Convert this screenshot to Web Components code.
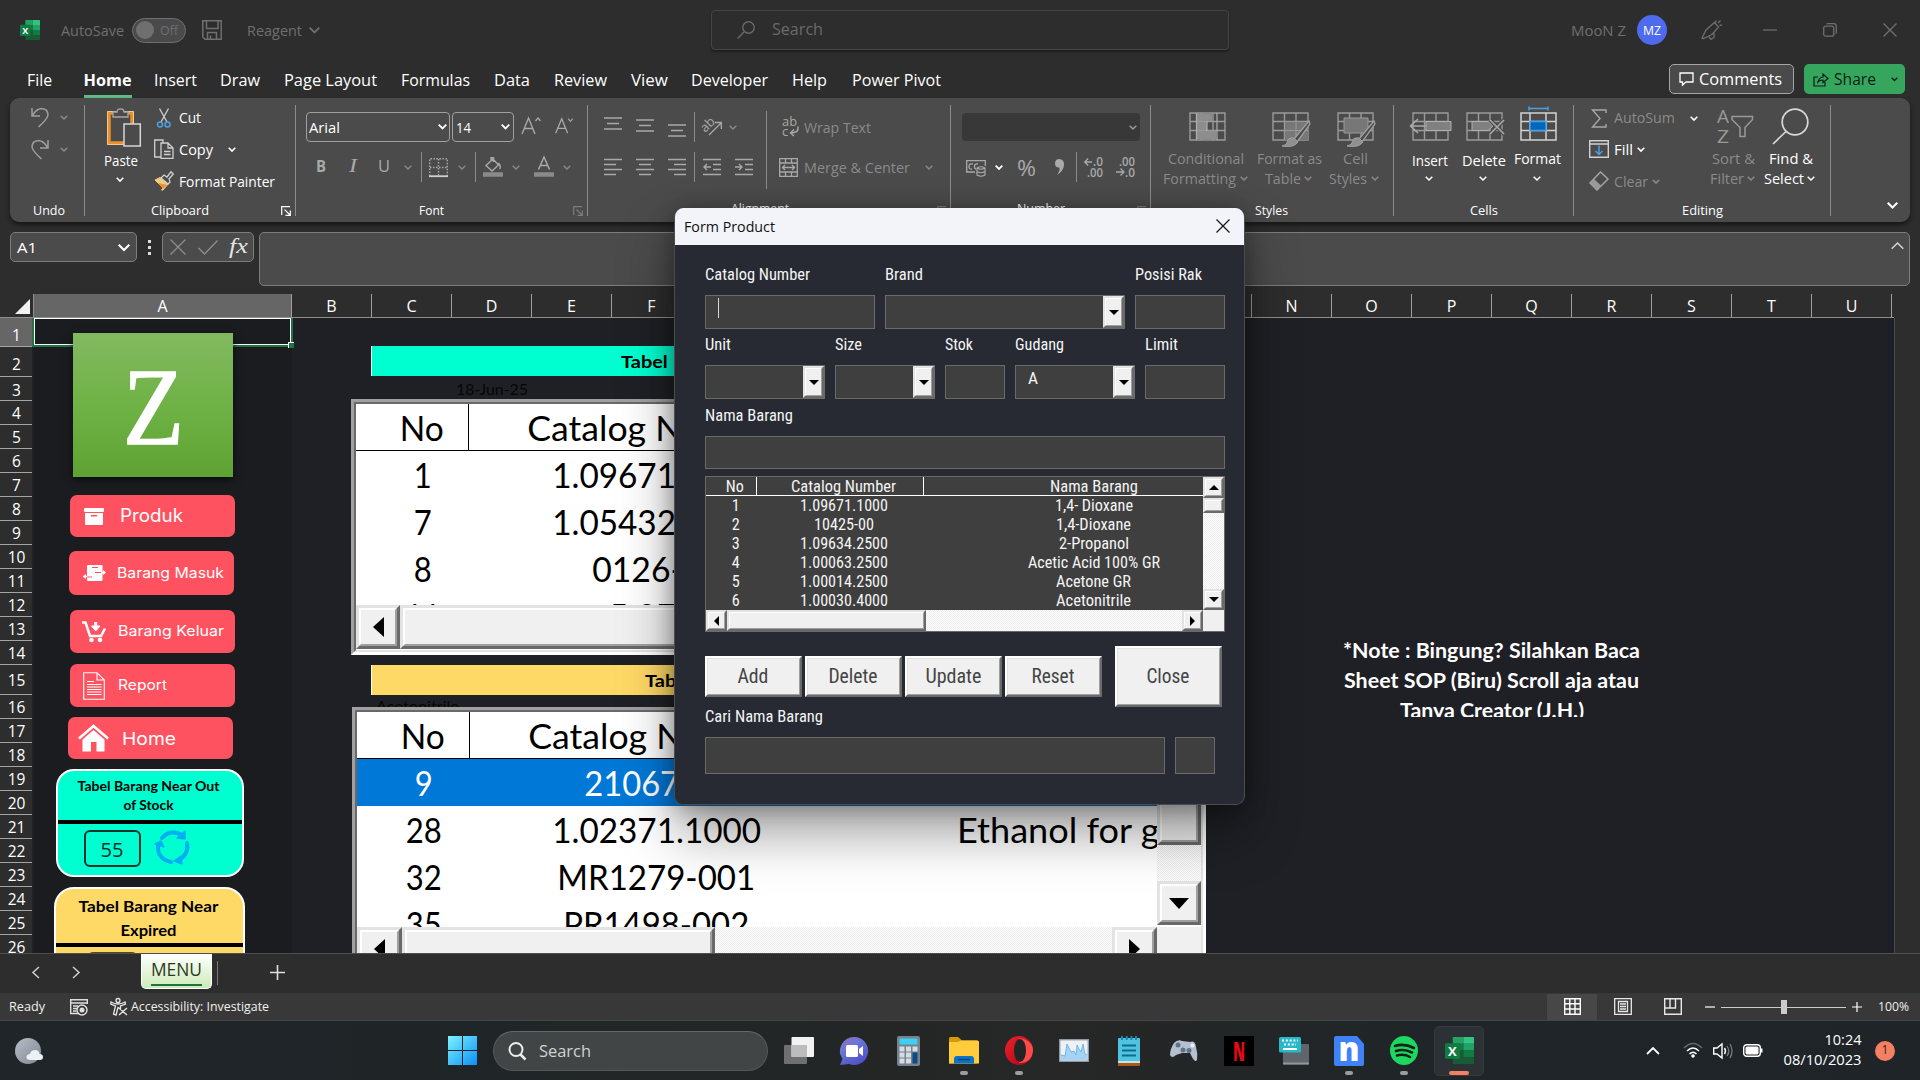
<!DOCTYPE html>
<html lang="id">
<head>
<meta charset="utf-8">
<title>Reagent - Excel</title>
<style>
html,body{margin:0;height:100%;background:#2d2d2d;overflow:hidden}
body{font-family:"Open Sans","Noto Sans",sans-serif;color:#fff;width:1920px;height:1080px}
</style>
</head>
<body>
<excel-app></excel-app>
<script>
const BASE = `<style>
:host{display:block;box-sizing:border-box}
*{box-sizing:border-box}
.h{display:flex;flex:none;align-self:stretch}
.v{display:flex;flex-direction:column;flex:none;align-self:flex-start}
.c{display:flex;flex:none;align-items:center}
svg{display:block;flex:none;overflow:visible}
</style>`;
/* Horizontal run: each item is [left, width, content], widths flow one after another. */
const H = (x0, items) => { let p = x0; return '<div class="h">' + items.map(([x, w, c, s = '']) => { const m = x - p; p = x + w; return `<div class="c" style="margin-left:${m}px;width:${w}px;${s}">${c}</div>`; }).join('') + '</div>'; };
/* Vertical run: each item is [top, height, content]. */
const V = (y0, items) => { let p = y0; return '<div class="v">' + items.map(([y, h, c, s = '']) => { const m = y - p; p = y + h; return `<div class="c" style="margin-top:${m}px;height:${h}px;${s}">${c}</div>`; }).join('') + '</div>'; };
const T = (s, w, fs, st = '') => `<fit-text w="${w}" style="font-size:${fs}px;${st}">${s}</fit-text>`;
const S = (w, h, inner, st = '') => `<svg width="${w}" height="${h}" viewBox="0 0 ${w} ${h}" fill="none" style="${st}">${inner}</svg>`;
const chev = (c = '#fff', w = 8, sw = 1.6) => S(w, w / 2 + 1, `<path d="M.7 .7L${w / 2} ${w / 2}L${w - .7} .7" stroke="${c}" stroke-width="${sw}"/>`);
const def = (name, html, css = '') => customElements.define(name, class extends HTMLElement {
  connectedCallback() {
    if (this.shadowRoot) return;
    this.attachShadow({ mode: 'open' }).innerHTML = BASE + `<style>${css}</style>` + (typeof html === 'function' ? html(this) : html);
  }
});

/* Text squeezed or widened to a known width; --dx and --dy nudge its baseline. */
customElements.define('fit-text', class extends HTMLElement {
  connectedCallback() {
    if (this.shadowRoot) return;
    const r = this.attachShadow({ mode: 'open' });
    r.innerHTML = '<style>:host{display:block;white-space:nowrap;flex:none;line-height:1.3}span{display:inline-block;transform-origin:0 50%}</style><span><slot></slot></span>';
    const sp = r.querySelector('span'), w = +this.getAttribute('w');
    const n = sp.getBoundingClientRect().width;
    this.style.width = w + 'px';
    if (n) sp.style.transform = `translate(var(--dx,0px),var(--dy,0px)) scaleX(${w / n})`;
  }
});

const excelLogo = (w, h) => `<svg width="${w}" height="${h}" viewBox="0 0 30 28" preserveAspectRatio="none"><path d="M8 0H19V7H8Z" fill="#21a366"/><path d="M19 0H29a1 1 0 0 1 1 1V7H19Z" fill="#33c481"/><path d="M8 7H19V14H8Z" fill="#107c41"/><path d="M19 7H30V14H19Z" fill="#21a366"/><path d="M8 14H19V21H8Z" fill="#185c37"/><path d="M19 14H30V21H19Z" fill="#107c41"/><path d="M8 21H30V27a1 1 0 0 1-1 1H9a1 1 0 0 1-1-1Z" fill="#185c37"/><rect x="0" y="6.500" width="15.500" height="16" rx="1.200" fill="#107c41"/><text x="7.700" y="19.500" text-anchor="middle" font-family="Open Sans" font-weight="700" font-size="13.500" fill="#fff">X</text></svg>`;

/* ---- title bar ---- */
def('title-bar', H(0, [
  [20, 20, excelLogo(20, 20)],
  [61, 63, T('AutoSave', 63, 14.5)],
  [132, 54, `<div class="tog"><i></i>${T('Off', 18, 13.5, 'color:#6e6e6e')}</div>`],
  [202, 20, S(20, 20, '<path d="M.8 .8H19.200V19.200H3L.8 17Z M4.500 1V8.500H16V1 M5.500 19V12.500H14.500V19 M8.500 19V15.500" stroke="#6f6f6f" stroke-width="1.500"/>')],
  [247, 55, T('Reagent', 55, 14.5)],
  [309, 11, chev('#6f6f6f', 11, 1.8)],
  [711, 518, `<div class="search">${H(712, [[737, 18, S(18, 18, '<circle cx="11.500" cy="6.500" r="5.700" stroke="#6a6a6a" stroke-width="1.400"/><path d="M7.500 10.500L.6 17.400" stroke="#6a6a6a" stroke-width="1.400"/>')], [772, 51, T('Search', 51, 16, 'color:#6a6a6a;--dy:-1px')]])}</div>`],
  [1571, 55, T('MooN Z', 55, 14.5)],
  [1637, 30, `<div class="av">${T('MZ', 18, 12, 'color:#fff')}</div>`],
  [1701, 21, S(21, 20, '<path d="M1 18L5 10L13.500 2.500L17.500 7L11 14.500L2.500 18.500ZM8 17L10 19.300L13 17.500L13 13M14.500 2.500L15 .3M17 3L19.500 .5M18.500 5.500L20.800 5" stroke="#6f6f6f" stroke-width="1.300"/>')],
  [1763, 14, S(14, 2, '<path d="M0 1H14" stroke="#6f6f6f" stroke-width="1.300"/>')],
  [1823, 14, S(14, 14, '<rect x=".7" y="3.200" width="10" height="10" rx="2" stroke="#6f6f6f" stroke-width="1.300"/><path d="M3.500 1Q4 .7 5 .7H10.500Q13.300 .7 13.300 3.500V9Q13.300 10 12.800 10.800" stroke="#6f6f6f" stroke-width="1.300"/>')],
  [1883, 14, S(14, 14, '<path d="M.5 .5L13.500 13.500M13.500 .5L.5 13.500" stroke="#6f6f6f" stroke-width="1.300"/>')],
]), `:host{height:60px;display:flex;color:#6f6f6f;background:#2d2d2d;--dy:.5px}
.tog{width:54px;height:25px;border:1px solid #6f6f6f;border-radius:13px;background:#4a4a4a;display:flex;align-items:center;padding-left:3px;gap:6px}
.tog i{width:18px;height:18px;border-radius:50%;background:#6f6f6f}
.search{width:518px;height:40px;display:flex;border:1px solid #454545;border-radius:4px;box-shadow:0 2px 2px rgba(0,0,0,.35)}
.av{width:30px;height:30px;border-radius:50%;background:#4f6bed;display:flex;align-items:center;justify-content:center}`);

/* ---- ribbon tabs ---- */
const tabs = [['File', 27, 25], ['Home', 84, 48], ['Insert', 154, 43], ['Draw', 220, 40], ['Page Layout', 284, 93], ['Formulas', 401, 69], ['Data', 494, 36], ['Review', 554, 53], ['View', 631, 37], ['Developer', 691, 77], ['Help', 792, 35], ['Power Pivot', 852, 89]];
def('ribbon-tabs', H(0, [
  ...tabs.map(([n, x, w]) => [x, w, n === 'Home' ? `<div class="on">${T(n, w, 16.5, 'font-weight:700;--dy:0px;--dx:-.5px')}</div>` : T(n, w, 17)]),
  [1669, 125, `<div class="btn">${H(1670, [[1679, 15, S(15, 14, '<path d="M1 1H14V10H7L3.500 13V10H1Z" stroke="#fff" stroke-width="1.300"/>')], [1699, 83, T('Comments', 83, 16.5, '--dy:0px')]])}</div>`],
  [1804, 101, `<div class="btn share">${H(1804, [[1813, 15, S(16, 15, '<path d="M5 5H1V14H12V10M5 10Q6 5.500 10 5V2L15 6.500L10 10.500V8Q7 8 5 10Z" stroke="#0d1f14" stroke-width="1.200"/>')], [1834, 42, T('Share', 42, 16.5, 'color:#0d1f14;--dy:0px')], [1891, 8, chev('#0d1f14', 7, 1.4)]])}</div>`],
]), `:host{height:38px;display:flex;--dy:1px}
.on{height:32px;border-bottom:3px solid #5fbf85;padding-top:3px;margin-bottom:-5px}
.btn{width:125px;height:30px;border:1px solid #a5a5a5;border-radius:5px;background:#4a4a4a;display:flex}
.share{width:101px;background:#36a65f;border:0}`);

/* ---- ribbon ---- */
const G = '#a9a9a9', D = '#8a8a8a';
const sep = (h) => `<div style="width:1px;height:${h}px;background:#8c8c8c"></div>`;
const lbl = (s, x, w, x0, launch, lc, dy = .8) => [202, 17, H(x0, [[x, w, T(s, w, 12.5, `--dy:${dy}px`)], ...(launch ? [[launch, 10, S(10, 10, `<path d="M.7 9V.7H9M3.500 3.500L9 9M9.300 4.500V9.300H4.500" stroke="${lc || '#7d7d7d'}" stroke-width="1.200"/>`)]] : [])])];
const lines = (arr) => S(18, 18, arr.map(([x, y, w]) => `<path d="M${x} ${y}H${x + w}" stroke="${G}" stroke-width="1.500"/>`).join(''));
const gridIcon = (w, h, extra) => S(w, h, `<path d="M1 1H36V28H1ZM1 9.500H36M1 18.500H36M12.500 1V28M24 1V28" stroke="#9a9a9a" stroke-width="1.400"/>` + extra);
const brush = '<path d="M37 9L22 27L25 30L38 12Z" fill="#4b4b4b" stroke="#a0a0a0" stroke-width="1.300"/><path d="M22 26Q15 25 15 31Q14 33 10 34Q22 36 26 30Z" fill="#909090" stroke="#a0a0a0"/>';
const aIcon = (up) => S(20, 20, `<path d="M1 18L7.500 2L14 18M3.500 12.500H11.500" stroke="${G}" stroke-width="1.400"/><path d="${up ? 'M14.500 5L17 2L19.500 5' : 'M14.500 2L17 5L19.500 2'}" stroke="${G}" stroke-width="1.200"/>`, up ? '' : 'transform:scale(.92)');

const undoG = V(98, [
  [106, 22, H(10, [[31, 18, S(18, 21, '<path d="M1 1V9H9M1.500 8.500Q5 2 10.500 1.500Q17 2 17 8Q16.500 12 7.500 20" stroke="#a0a0a0" stroke-width="1.500"/>')], [60, 8, chev('#8f8f8f', 8, 1.3)]])],
  [138, 22, H(10, [[31, 18, S(18, 21, '<path d="M17 1V9H9M16.500 8.500Q13 2 7.500 1.500Q1 2 1 8Q1.500 12 10.500 20" stroke="#a0a0a0" stroke-width="1.500"/>')], [60, 8, chev('#8f8f8f', 8, 1.3)]])],
  lbl('Undo', 33, 32, 10)]);

const pasteIc = S(34, 39, '<path d="M2 5H25V35H2Z" fill="#4b4b4b" stroke="#e8912d" stroke-width="3.500"/><path d="M.5 3.500H26.500V36.500H.5Z" stroke="#f5c98a"/><path d="M6 9V4H10Q10 .8 13.500 .8Q17 .8 17 4H21V9Z" fill="#4b4b4b" stroke="#a8a8a8" stroke-width="1.300"/><path d="M17 16H33.300V38H17Z" fill="#4b4b4b" stroke="#d6d6d6" stroke-width="1.500"/>');
const clipG = V(98, [
  [98, 100, H(85, [
    [104, 40, V(98, [[108, 38, H(104, [[107, 34, pasteIc]])], [153, 17, T('Paste', 34, 14.5)], [176, 6, H(104, [[116, 8, chev()]])]])],
    [154, 122, V(98, [
      [107, 22, H(154, [[157, 14, S(14, 20, '<path d="M2.500 .5L10 14M11.500 .5L4 14" stroke="#d0d0d0" stroke-width="1.300"/><circle cx="3" cy="16.500" r="2.500" stroke="#4ba0e0" stroke-width="1.500"/><circle cx="10.500" cy="16.500" r="2.500" stroke="#4ba0e0" stroke-width="1.500"/>')], [179, 22, T('Cut', 22, 14.5)]])],
      [138, 22, H(154, [[154, 20, S(20, 20, '<path d="M7 18H.7V1H9V4" stroke="#d0d0d0" stroke-width="1.300"/><path d="M7 4H14L19 9V19.300H7ZM14 4V9H19M10 12.500H16.500M10 15.500H16.500" stroke="#d0d0d0" stroke-width="1.300"/>')], [179, 34, T('Copy', 34, 14.5, '--dy:.7px')], [228, 8, chev()]])],
      [170, 22, H(154, [[154, 20, S(20, 20, '<path d="M1 9L9 17Q6 20 9 19L15 12L6 6.500Z" fill="#f2c879" stroke="#f5c98a"/><path d="M4 12L9 18L13 14Z" fill="#e8912d"/><path d="M7 7L10 4L13 6L17 .8L19.300 3L15 8L16 11L14 13Z" fill="#4b4b4b" stroke="#d0d0d0" stroke-width="1.300"/>')], [179, 96, T('Format Painter', 96, 14.5, '--dy:.5px')]])]])]
  ])],
  lbl('Clipboard', 151, 58, 85, 281, '#fff')]);

const c8 = (x) => [x - 1, 8, chev(D, 8, 1.3)];
const fontG = V(98, [
  [112, 30, H(296, [
    [306, 144, `<div class="combo" style="width:144px">${H(307, [[309, 31, T('Arial', 31, 14.5, '--dy:.8px')], [438, 8, chev('#fff', 9, 1.8)]])}</div>`],
    [452, 62, `<div class="combo" style="width:62px">${H(453, [[456, 15, T('14', 15, 14.5, '--dy:.8px')], [501, 8, chev('#fff', 9, 1.8)]])}</div>`],
    [521, 20, aIcon(1), 'padding-bottom:2px'], [554, 20, aIcon(0), 'padding-bottom:2px']])],
  [152, 30, H(296, [
    [316, 9, T('B', 10, 16, 'font-weight:700;--dy:-1px;color:' + G)],
    [349, 8, T('I', 8, 18, 'font-family:Liberation Serif;font-style:italic;--dy:-.5px;color:' + G)],
    [378, 11, T('U', 12, 16, 'text-decoration:underline;text-underline-offset:4px;--dy:-1px;color:' + G)], c8(405),
    [421, 1, sep(30)],
    [429, 19, S(19, 19, `<path d="M.7 18V.7H18.300V18M9.500 1V18M1 9.500H18" stroke="${G}" stroke-width="1.400" stroke-dasharray="1.500 1.500"/><path d="M0 18.200H19" stroke="#d0d0d0" stroke-width="1.800"/>`)], c8(459),
    [475, 1, sep(30)],
    [483, 20, S(20, 20, `<path d="M3 8.500L10 2L15.500 8L9 14ZM8 4V.8H10.500V5M15.500 6Q18.500 10 16.500 12" stroke="${G}" stroke-width="1.400"/><path d="M0 17.500H20" stroke="#8a8a8a" stroke-width="4.500"/>`)], c8(513),
    [534, 20, S(20, 20, `<path d="M4.500 12.500L10 0L15.500 12.500M6.500 8.500H13.500" stroke="${G}" stroke-width="1.500"/><path d="M0 17.500H20" stroke="#8a8a8a" stroke-width="4.500"/>`)], c8(564)])],
  lbl('Font', 419, 25, 296, 573)]);

const alignG = V(98, [
  [98, 94, H(588, [
    [588, 178, V(98, [
      [112, 30, H(588, [[604, 18, lines([[0, 5, 18], [3, 10.5, 12], [0, 16, 18]]), 'padding-bottom:10px'], [636, 18, lines([[0, 2, 18], [3, 7.5, 12], [0, 13, 18]])], [668, 18, lines([[0, 5, 18], [3, 10.5, 12], [0, 16, 18]]), 'padding-top:3px'], [694, 1, sep(30)],
        [702, 20, S(20, 20, `<text x="-1" y="13" transform="rotate(-45 6 10)" font-family="Open Sans" font-size="13" fill="${G}">ab</text><path d="M7 19L19 7M13 6.500H19.300V13" stroke="${G}" stroke-width="1.300"/>`), 'padding-bottom:2px'], c8(730)])],
      [152, 30, H(588, [[604, 18, lines([[0, 1.5, 18], [0, 6.5, 12], [0, 11.5, 18], [0, 16.5, 12]])], [636, 18, lines([[0, 1.5, 18], [3, 6.5, 12], [0, 11.5, 18], [3, 16.5, 12]])], [668, 18, lines([[0, 1.5, 18], [6, 6.5, 12], [0, 11.5, 18], [6, 16.5, 12]])], [694, 1, sep(30)],
        [703, 18, S(18, 18, `<path d="M0 1.500H18M10 6.500H18M10 11.500H18M0 16.500H18M8 9H1M4 6L1 9L4 12" stroke="${G}" stroke-width="1.400"/>`)],
        [735, 18, S(18, 18, `<path d="M0 1.500H18M10 6.500H18M10 11.500H18M0 16.500H18M0 9H7M4 6L7 9L4 12" stroke="${G}" stroke-width="1.400"/>`)]])]])],
    [766, 1, `<div style="width:1px;height:78px;margin-top:10px;background:#8c8c8c"></div>`],
    [779, 160, V(98, [
      [112, 30, H(779, [[782, 17, S(17, 20, `<text x="0" y="8.500" font-family="Open Sans" font-size="13" fill="${G}" textLength="15" lengthAdjust="spacingAndGlyphs">ab</text><text x="0" y="19" font-family="Open Sans" font-size="13" fill="${G}">c</text><path d="M16 9.500Q17 16 9 16M12 12.500L8.500 16L12 19" stroke="${G}" stroke-width="1.400"/>`)], [804, 67, T('Wrap Text', 67, 14.5, '--dy:.8px;color:' + D)]])],
      [152, 30, H(779, [[779, 19, S(19, 19, `<path d="M.7 .7H18.300V18.300H.7ZM.7 5H18.300M.7 14H18.300M6.500 .7V5M12.500 .7V5M6.500 14V18.300M12.500 14V18.300M3 9.500H16M6 7L3.500 9.500L6 12M13 7L15.500 9.500L13 12" stroke="${G}" stroke-width="1.300"/>`)], [804, 106, T('Merge &amp; Center', 106, 14.5, '--dy:.5px;color:' + D)], c8(926)])]])]])],
  lbl('Alignment', 731, 58, 588, 937, '', -.6)]);

const numG = V(98, [
  [113, 28, H(951, [[962, 178, `<div class="dark">${H(962, [[1129, 8, chev('#9a9a9a', 8, 1.5)]])}</div>`]])],
  [152, 30, H(951, [
    [966, 20, S(20, 17, `<path d="M9 12H.7V.7H19.300V6" stroke="${G}" stroke-width="1.300"/><path d="M7 4Q3 3 3 6.500Q3 9.500 6 9M12 4Q8.500 3.500 8.500 6.500Q8.500 9 10 9" stroke="${G}" stroke-width="1.300"/><path d="M11 8Q15 5.500 19 8V15Q15 17.500 11 15ZM11 8Q15 10.500 19 8M11 11.500Q15 14 19 11.500" fill="#4b4b4b" stroke="${G}" stroke-width="1.200"/>`), 'padding-top:3px'], [995, 8, chev('#fff', 8, 1.8)],
    [1018, 19, T('%', 19, 22, '--dx:-1px;color:' + G)],
    [1054, 11, S(11, 18, `<path d="M5 1Q10.500 1.500 10 7Q9.500 13 3 17Q6 13 5.500 9.500Q1 10 1 5Q1.500 1 5 1Z" fill="${G}"/>`)],
    [1076, 1, sep(30)],
    [1084, 20, S(20, 20, `<path d="M8 5H.7M4.200 1.500L.7 5L4.200 8.500" stroke="${G}" stroke-width="1.300"/><text x="9" y="9" font-family="Open Sans" font-size="12" font-weight="600" fill="${G}" textLength="10" lengthAdjust="spacingAndGlyphs">.0</text><text x="3" y="19.500" font-family="Open Sans" font-size="12" font-weight="600" fill="${G}" textLength="16" lengthAdjust="spacingAndGlyphs">.00</text>`)],
    [1116, 20, S(20, 20, `<path d="M0 15H8M4.500 11.500L8 15L4.500 18.500" stroke="${G}" stroke-width="1.300"/><text x="3" y="9" font-family="Open Sans" font-size="12" font-weight="600" fill="${G}" textLength="16" lengthAdjust="spacingAndGlyphs">.00</text><text x="9" y="19.500" font-family="Open Sans" font-size="12" font-weight="600" fill="${G}" textLength="10" lengthAdjust="spacingAndGlyphs">.0</text>`)]])],
  lbl('Number', 1017, 48, 951, 1137, '', -.6)]);

const big = (x0, w, ic, icx, l1, x1, w1, l2, x2, w2, cx, col, dy = 0) => [x0, w, V(98, [
  [105, 42, H(x0, [[icx, 38, ic]])],
  [150, 18, H(x0, [[x1, w1, T(l1, w1, 14.5, `--dy:${dy}px;color:` + col)]])],
  [169, 18, H(x0, [...(l2 ? [[x2, w2, T(l2, w2, 14.5, '--dy:.8px;color:' + col)]] : []), [cx - 1, 8, chev(col, 8, 1.5)]])]])];
const styleG = V(98, [
  [98, 100, H(1151, [
    big(1163, 86, gridIcon(37, 29, '<path d="M8 2H23V9H8ZM8 19H27V27H8ZM8 10H18V18H8Z" fill="#8d8d8d"/><path d="M7.500 1V28M28 1V28M18 9V19" stroke="#b0b0b0" stroke-width="1.200"/>'), 1189, 'Conditional', 1168, 76, 'Formatting', 1163, 73, 1241, D),
    big(1257, 66, gridIcon(37, 29, '<path d="M13 10H36V28H13Z" fill="#777"/><path d="M13 18.500H36M24 10V28" stroke="#9a9a9a"/>' + brush), 1272, 'Format as', 1257, 65, 'Table', 1265, 36, 1305, D),
    big(1329, 52, gridIcon(37, 29, '<path d="M7 6H31V21H7Z" fill="#777" stroke="#9a9a9a"/>' + brush), 1337, 'Cell', 1343, 25, 'Styles', 1329, 38, 1372, D)])],
  lbl('Styles', 1255, 33, 1151)]);
const cellG = V(98, [
  [98, 100, H(1394, [
    big(1410, 42, gridIcon(38, 29, '<path d="M14 9.500H39V18.500H14Z" fill="#808080" stroke="#b0b0b0"/><path d="M-2 14H14M6 7L-1.500 14L6 21" stroke="#a9a9a9" stroke-width="1.600"/>'), 1412, 'Insert', 1412, 36, '', 0, 0, 1426, '#fff', 1.5),
    big(1462, 44, gridIcon(38, 29, '<path d="M6 9.500H22L27 14L22 18.500H6Z" fill="#808080" stroke="#b0b0b0"/><path d="M24 8L38 22M38 8L24 22" stroke="#4b4b4b" stroke-width="4"/><path d="M24 8L38 22M38 8L24 22" stroke="#a9a9a9" stroke-width="1.600"/>'), 1466, 'Delete', 1462, 44, '', 0, 0, 1480, '#fff', 1.5),
    big(1514, 47, S(37, 29, '<path d="M1 1H36V28H1ZM1 9.500H36M1 18.500H36M10 1V28M26 1V28" stroke="#d2d2d2" stroke-width="1.500"/><path d="M10 9.500H26V18.500H10Z" fill="#0067c0" stroke="#4ba0e0" stroke-width="1.300"/><path d="M9 -3.500H28M9 -5.500V-1.500M28 -5.500V-1.500" stroke="#4ba0e0" stroke-width="1.500"/>'), 1520, 'Format', 1514, 47, '', 0, 0, 1534, '#fff')])],
  lbl('Cells', 1470, 28, 1394)]);
const editG = V(98, [
  [98, 100, H(1574, [
    [1589, 112, V(98, [
      [107, 22, H(1589, [[1591, 17, S(17, 19, `<path d="M15 4V1H1.500L9 9.500L1.500 18H15V15" stroke="${G}" stroke-width="1.400"/>`)], [1614, 61, T('AutoSum', 61, 14.5, 'color:' + D)], [1690, 8, chev()]])],
      [138, 22, H(1589, [[1589, 20, S(20, 18, '<path d="M.7 .7H19.300V17.300H.7ZM.7 4H19.300" stroke="#d2d2d2" stroke-width="1.400"/><path d="M10 5.500V14.500M6.500 11L10 14.500L13.500 11" stroke="#4ba0e0" stroke-width="1.500"/>')], [1614, 19, T('Fill', 19, 14.5, '--dy:.7px')], [1637, 8, chev()]])],
      [170, 22, H(1589, [[1589, 20, S(20, 20, `<path d="M1 12L11.500 1L19 8L8 19Z" stroke="${G}" stroke-width="1.400"/><path d="M1 12L5 8L12.500 15L8 19Z" fill="#999"/>`)], [1614, 34, T('Clear', 34, 14.5, '--dy:.5px;color:' + D)], [1652, 8, chev(D)]])]])],
    big(1710, 46, S(38, 34, `<text x="0" y="14" font-family="Open Sans" font-size="19" fill="#999" textLength="12" lengthAdjust="spacingAndGlyphs">A</text><text x="0" y="34" font-family="Open Sans" font-size="19" fill="#999" textLength="12" lengthAdjust="spacingAndGlyphs">Z</text><path d="M15 7.500H35.500V10.500L28 18.500V27.500H23V18.500L15 10.500Z" stroke="#999" stroke-width="1.500"/>`), 1717, 'Sort &amp;', 1712, 43, 'Filter', 1710, 34, 1748, D),
    big(1764, 54, S(37, 37, '<circle cx="23" cy="14" r="12.800" stroke="#d8d8d8" stroke-width="1.700"/><path d="M14 23.500L1 36" stroke="#d8d8d8" stroke-width="1.700"/>'), 1772, 'Find &amp;', 1769, 44, 'Select', 1764, 40, 1808, '#fff')])],
  lbl('Editing', 1682, 41, 1574)]);
const gs = '<div style="width:1px;height:111px;background:#8c8c8c"></div>';
def('excel-ribbon', H(10, [[10, 74, undoG], [84, 1, gs], [85, 210, clipG], [295, 1, gs], [296, 291, fontG], [587, 1, gs], [588, 362, alignG], [950, 1, gs], [951, 199, numG], [1150, 1, gs], [1151, 242, styleG], [1393, 1, gs], [1394, 179, cellG], [1573, 1, gs], [1574, 256, editG], [1830, 1, gs], [1887, 11, chev('#fff', 11, 2), 'padding-top:90px']]),
`:host{height:124px;margin:0 10px;display:flex;background:#4b4b4b;border-radius:9px;box-shadow:0 3px 5px rgba(0,0,0,.5)}
.combo{height:30px;border:1px solid #a0a0a0;border-radius:4px;display:flex}
.dark{height:28px;width:178px;border-radius:4px;background:#383838;display:flex}`);

/* ---- formula bar ---- */
def('formula-bar', `<div class="box nm">${H(11, [[17, 20, T('A1', 20, 14.5, '--dy:.8px')], [118, 12, chev('#fff', 12, 2)]])}</div>
<div class="dots"><i></i><i></i><i></i></div>
<div class="box fx">${H(163, [[170, 16, S(16, 16, '<path d="M.5 .5L15.500 15.500M15.500 .5L.5 15.500" stroke="#8d8d8d" stroke-width="1.300"/>')], [198, 20, S(20, 15, '<path d="M.5 8L6.500 14L19.500 .5" stroke="#8d8d8d" stroke-width="1.300"/>')], [229, 20, T('fx', 19, 22, 'font-family:Liberation Serif;font-style:italic;color:#e4e4e4;--dy:-1px')]])}</div>
<div class="box in">${chev('#d5d5d5', 13, 1.5).replace('style="', 'style="transform:scaleY(-1);')}</div>`,
`:host{height:72px;display:flex;padding:10px 10px 0}
.box{border:1px solid #7d7d7d;border-radius:5px;background:#4b4b4b;display:flex;height:30px}
.nm{width:127px}.dots{width:25px;height:30px;display:flex;flex-direction:column;gap:3px;align-items:center;justify-content:center}.dots i{width:3px;height:3px;background:#ddd}
.fx{width:92px}.in{margin-left:5px;width:1651px;height:54px;justify-content:flex-end;padding:9px 5px}`);

/* ---- bevelled scrollbar button ---- */
def('bevel-box', el => `<div class="b" style="height:100%;width:100%">${({ l: '<i style="border-width:var(--a) var(--b) var(--a) 0;border-right-color:#000"></i>', r: '<i style="border-width:var(--a) 0 var(--a) var(--b);border-left-color:#000"></i>', u: '<i style="border-width:0 var(--a) var(--b) var(--a);border-bottom-color:#000"></i>', d: '<i style="border-width:var(--b) var(--a) 0 var(--a);border-top-color:#000"></i>' })[el.getAttribute('dir')] || ''}</div>`,
`:host{--k:2px;--a:5px;--b:5px;flex:none;border-style:solid;border-width:var(--k);border-color:#e3e3e3 #696969 #696969 #e3e3e3}
:host([big]){--k:3px;--a:10px;--b:11px}
.b{background:#f0f0f0;display:flex;align-items:center;justify-content:center;border-style:solid;border-width:1px;border-color:#fff #a0a0a0 #a0a0a0 #fff}
:host([big]) .b{border-width:2px}
i{width:0;height:0;border-style:solid;border-color:transparent}`);
const bev = (w, h, dir = '', b = '') => `<bevel-box ${b} dir="${dir}" style="width:${w}px;height:${h}px"></bevel-box>`;

/* ---- embedded sheet list box ---- */
def('sheet-list', el => {
  const rows = JSON.parse(el.getAttribute('rows')), vs = el.hasAttribute('vscroll'), bodyH = +el.getAttribute('body');
  const cell = ([no, nw, cat, cw, nx, xw, cx]) => `<div class="r ${no === '9' ? 'sel' : ''}"><div class="a">${T(no, nw, 34)}</div><div class="b" style="padding-left:${cx}px">${T(cat, cw, 34)}</div>${nx ? `<div class="x">${T(nx, xw, 34)}</div>` : ''}</div>`;
  return `<div class="in"><div class="body" style="height:${bodyH}px"><div class="rows"><div class="r hd"><div class="a">${T('No', 44, 34)}</div><div class="b" style="padding-left:59px">${T('Catalog Number', 256, 34)}</div></div>${rows.map(cell).join('')}</div>
${vs ? `<div class="vs">${bev(44, 133, '', 'big')}<div class="tr" style="height:36px"></div>${bev(44, 44, 'd', 'big')}</div>` : ''}</div>
<div class="hs">${bev(vs ? 45 : 44, 44, 'l', 'big')}${bev(vs ? 313 : 600, 44, '', 'big')}<div class="tr" style="flex:1"></div>${bev(45, 44, 'r', 'big')}<div class="corner"></div></div></div>`;
}, `:host{width:854px;border-style:solid;border-width:3px;border-color:#a0a0a0 #fff #fff #a0a0a0;overflow:hidden;color:#000;font-family:Lato,sans-serif;--dx:-.2px;--dy:.5px}
.in{border-style:solid;border-width:2px;border-color:#696969 #e3e3e3 #e3e3e3 #696969;background:#fff;height:100%}
.body{display:flex;overflow:hidden}.rows{flex:none;width:800px;overflow:hidden}
.r{height:47px;display:flex;align-items:center}.hd{height:47px;border-bottom:1px solid #000}
.sel{background:#0078d7;color:#fff}
.a{width:113px;height:47px;padding-left:20px;display:flex;align-items:center;justify-content:center;flex:none}
.hd .a{border-right:1px solid #000}
.b{width:488px;flex:none;--dx:-.8px}.x{flex:none;--dx:-1px}
.vs{width:44px}.tr{background:repeating-conic-gradient(#fff 0 25%,#ededed 0 50%) 0 0/2px 2px}
.hs{display:flex;height:44px;background:#f0f0f0}.corner{width:44px}`);

/* ---- side menu button ---- */
def('side-button', el => `<span class="ic"><slot name="icon"></slot></span>${T(el.getAttribute('label'), +el.getAttribute('tw'), +el.getAttribute('fs'))}`,
`:host{display:flex;align-items:center;background:#ff5260;border-radius:7px;width:165px;font-family:Inter,sans-serif;color:#fff;--dy:.4px}
.ic{display:flex;flex:none;width:var(--iw);justify-content:flex-start;padding-left:var(--ip)}`);

/* ---- sheet ---- */
const rowH = [29, 30, 24, 24, 24, 24, 24, 24, 24, 24, 24, 24, 24, 24, 30, 24, 24, 24, 24, 24, 24, 24, 24, 24, 24, 24];
const cols = 'ABCDEFGHIJKLMNOPQRSTU'.split('');
const at = (x, y, w, h, c, s = '') => `<div style="position:absolute;left:${x}px;top:${y - 318}px;width:${w}px;${h ? `height:${h}px;` : ''}${s}">${c}</div>`;
const sb = (x, y, h, label, tx, tw, fs, ix, icon) => at(x, y, 165, h, `<side-button label="${label}" tw="${tw}" fs="${fs}" style="height:${h}px;--iw:${tx - x}px;--ip:${ix - x}px"><span slot="icon">${icon}</span></side-button>`);
const black = 'color:#000;font-family:Lato;font-weight:700';
def('sheet-grid', `<div class="ch"><div class="corner">${S(15, 15, '<path d="M15 0V15H0Z" fill="#f2f2f2"/>')}</div>${cols.map((c, i) => `<div class="col ${i ? '' : 'on'}">${c}</div>`).join('')}</div>
<div class="main"><div class="rh">${rowH.map((h, i) => `<div class="${i ? '' : 'on'}" style="height:${h}px">${i + 1}</div>`).join('')}</div>
<div class="canvas"><div class="colA"></div><div class="sel"><b></b></div>
${at(73, 333, 160, 144, T('Z', 61, 110, 'font-family:Liberation Serif;line-height:1;-webkit-text-stroke:1.5px #fff'), 'background:linear-gradient(#83b961,#6fb245 50%,#5fa234);box-shadow:0 3px 8px rgba(0,0,0,.6);display:flex;align-items:center;justify-content:center;padding-top:4px')}
${sb(70, 495, 42, 'Produk', 120, 63, 18, 84, S(20, 17, '<rect width="20" height="4" rx="1" fill="#fff"/><path d="M1 5H19V16Q19 17 18 17H2Q1 17 1 16ZM7 7V8.500H13V7Z" fill="#fff" fill-rule="evenodd"/>'))}
${sb(69, 551, 44, 'Barang Masuk', 117, 107, 14.5, 83, S(23, 17, '<rect x="4" width="15.500" height="16" rx="1" fill="#fff"/><path d="M9 2.500H15M12 7.500H18M4 12H9" stroke="#ff5260" stroke-width="1"/><path d="M0 11.500H4M19 7.500H22" stroke="#fff" stroke-width="1.500"/><path d="M20 5L23 7.500L20 10ZM3 9L0 11.500L3 14Z" fill="#fff"/>'))}
${sb(70, 610, 43, 'Barang Keluar', 118, 106, 14.5, 82, S(24, 22, '<path d="M0 1.500H3.500L8 15H19L23 7.500" stroke="#fff" stroke-width="2.500"/><path d="M13.700 1V7" stroke="#fff" stroke-width="3"/><path d="M9.500 5L13.700 10L18 5Z" fill="#fff" stroke="#fff"/><circle cx="9.500" cy="19" r="2.300" fill="#fff"/><circle cx="18" cy="19" r="2.300" fill="#fff"/>'))}
${sb(70, 664, 43, 'Report', 118, 49, 14.5, 83, S(22, 28, '<path d="M.7 .7H14L21.300 8V27.300H.7ZM14 .7V8H21.300" stroke="#fff" stroke-width="1.100"/><path d="M4 9.500H11M4 12.500H18.500M4 15H18.500M4 17.500H18.500M4 20H18.500M4 22.500H18.500" stroke="#fff" stroke-width="1.200"/>'))}
${sb(68, 717, 42, 'Home', 122, 54, 17.5, 78, S(31, 28, '<path d="M1 14.500L15.500 2L30 14.500" stroke="#fff" stroke-width="2.600"/><path d="M15.500 6L26.500 15.500V27.500H18.500V18H13V27.500H4.500V15.500Z" fill="#fff"/>')).replace('--iw', '--dy:1.200px;--iw')}
${at(56, 769, 188, 108, `<div class="ct">${T('Tabel Barang Near Out', 142, 13.5, black)}${T('of Stock', 50, 13.5, black)}</div><div class="bar"></div><div class="cb"><div class="num">${T('55', 23, 20, 'color:#062b24')}</div>${S(36, 36, '<path d="M8 8Q17 -2 29 6M33 13Q35 24 25 30M17 32Q3 29 4 15" stroke="#00b0f0" stroke-width="4" stroke-linecap="round"/><path d="M31 1L31 9L23 8ZM20 31L27 26L28 34ZM1 14L7 11L10 17Z" fill="#00b0f0" stroke="#00b0f0" stroke-width="1.500" stroke-linejoin="round"/>')}</div>`, 'background:#00ffd0;border:2px solid #fff;border-radius:18px;display:flex;flex-direction:column')}
${at(54, 887, 191, 130, `<div class="ct y">${T('Tabel Barang Near', 140, 15.5, black)}${T('Expired', 56, 15.5, black)}</div><div class="bar"></div>${'<div style="margin:5px 0 0 31px;width:51px;height:30px;border:2px solid #5a4c22;border-radius:6px"></div>'}`, 'background:#ffd966;border:2px solid #fff;border-radius:20px')}
${at(371, 346, 835, 30, T('Tabel Barang', 114, 17, black + ';--dy:1px'), 'background:#00ffd0;border-left:1px solid #fff;padding-left:249px;display:flex;align-items:center')}
${at(456, 380, 74, 18, T('18-Jun-25', 72, 14.5, 'color:#060606;font-family:Lato;--dy:1px'))}
${at(371, 665, 835, 30, T('Tabel Barang', 114, 17, black + ';--dy:1px'), 'background:#ffd966;border-left:1px solid #fff;padding-left:273px;display:flex;align-items:center')}
${at(376, 698, 90, 9, T('Acetonitrile', 83, 14.5, 'color:#060606;font-family:Lato'), 'overflow:hidden')}
${at(351, 399, 855, 256, `<sheet-list style="height:256px" body="201" rows='[["1",18,"1.09671.1000",209,"",0,84],["7",18,"1.05432.2500",209,"",0,84],["8",18,"0126-01",130,"",0,124],["11",36,"5.07010",130,"",0,140]]'></sheet-list>`)}
${at(352, 707, 855, 300, `<sheet-list vscroll style="height:300px" body="215" rows='[["9",18,"21067-01",145,"",0,115],["28",36,"1.02371.1000",209,"Ethanol for gas",236,83],["32",36,"MR1279-001",198,"",0,88],["35",36,"PR1498-002",186,"",0,94]]'></sheet-list>`)}
${at(1329, 636, 324, 81, `<div>${T('*Note : Bingung? Silahkan Baca', 297, 21.5)}</div><div>${T('Sheet SOP (Biru) Scroll aja atau', 295, 21.5)}</div><div>${T('Tanya Creator (J.H.)', 184, 21.5, '--dx:1px')}</div>`, 'overflow:hidden;font-family:Lato;font-weight:700;color:#fff" class="note')}
</div><div class="edge"></div></div>`,
`:host{height:659px;display:flex;flex-direction:column;overflow:hidden}
.ch{display:flex;height:24px;flex:none;border-bottom:1px solid #8f8f8f;width:1894px;font:16px "Open Sans"}
.corner{width:34px;padding:5px 0 0 15px;border-right:1px solid #8f8f8f}
.col{width:80px;border-right:1px solid #a0a0a0;display:flex;align-items:center;justify-content:center;height:23px;padding-top:1px}
.col.on{width:258px;background:#666}
.main{display:flex;flex:1;min-height:0;overflow:hidden}
.rh{width:34px;flex:none;border-right:1px solid #8f8f8f;font:15.5px "Open Sans"}
.rh div{border-bottom:1px solid #a5a5a5;display:flex;align-items:center;justify-content:center;padding-top:1px;line-height:20px}
.rh .on{background:#666;padding-top:5px}.rh div:nth-child(2){padding-top:5px}.rh div:nth-child(3){padding-top:2px}
.canvas{flex:none;background:#1f2025;position:relative;overflow:hidden;margin-left:-34px;padding-left:34px;width:1894px;clip-path:inset(-3px 0 0 32px)}
.colA{width:258px;height:100%;background:#1b1c20}
.sel{position:absolute;left:32px;top:-2px;width:261px;height:31px;border:2px solid #217346;box-shadow:inset 0 0 0 1px #fff}
.sel b{position:absolute;right:-3px;bottom:-3px;width:6px;height:6px;background:#217346;border-left:1px solid #fff;border-top:1px solid #fff}
.edge{flex:1;background:#2d2d2d;border-left:1px solid #4a4a4a}
.ct{height:49px;display:flex;flex-direction:column;align-items:center;justify-content:center;gap:1px;padding-top:2px;--dx:-1.5px}
.ct.y{height:54px;gap:3px;padding-top:4px}
.bar{height:4px;background:#000}
.cb{display:flex;padding:6px 0 0 26px;gap:13px;--dx:-.5px;--dy:1px}
.num{width:57px;height:37px;border:2px solid #04352c;border-radius:6px;display:flex;align-items:center;justify-content:center}
.note>div{height:30px;display:flex;justify-content:center;align-items:center}`);

/* ---- user form ---- */
def('form-box', el => `${el.hasAttribute('caret') ? '<i class="caret"></i>' : ''}<slot></slot>${el.hasAttribute('drop') ? `<div class="d">${bev(21, 32, 'd')}</div>` : ''}`,
`:host{display:flex;flex:none;background:#3f3f3f;border:1px solid #6a6a6a}
.caret{margin:2px 0 0 12px;width:1px;height:20px;background:#d8d8d8}.d{margin-left:auto}`);
def('form-button', el => `<div>${T(el.getAttribute('label'), +el.getAttribute('tw'), 19.5, 'color:#444')}</div>`,
`:host{flex:none;border-style:solid;border-width:2px;border-color:#fff #696969 #696969 #fff;background:#f0f0f0}
div{width:100%;height:100%;border-style:solid;border-width:1px;border-color:#e3e3e3 #a0a0a0 #a0a0a0 #e3e3e3;display:flex;align-items:center;justify-content:center}`);
const F = (x, w, a = '', h = 34, c = '') => [x, w, `<form-box ${a} style="width:${w}px;height:${h}px">${c}</form-box>`];
const L = (s, x, w) => [x, w, T(s, w, 16.5)];
const B = (s, x, w, tw, h) => [x, w, `<form-button label="${s}" tw="${tw}" style="width:${w}px;height:${h}px"></form-button>`];
const data = [['1', 8, '1.09671.1000', 88, '1,4- Dioxane', 78], ['2', 8, '10425-00', 60, '1,4-Dioxane', 75], ['3', 8, '1.09634.2500', 88, '2-Propanol', 70], ['4', 8, '1.00063.2500', 88, 'Acetic Acid 100% GR', 132], ['5', 8, '1.00014.2500', 88, 'Acetone GR', 75], ['6', 8, '1.00030.4000', 88, 'Acetonitrile', 75]];
def('user-form', `<div class="bar">${T('Form Product', 91, 15, 'color:#111;font-family:Open Sans;--dy:2px;--dx:1px')}${S(14, 14, '<path d="M.5 .5L13.500 13.500M13.500 .5L.5 13.500" stroke="#1a1a1a" stroke-width="1.300"/>', 'margin-top:1px')}</div>` + V(245, [
  [264, 20, H(674, [L('Catalog Number', 705, 105), L('Brand', 885, 38), L('Posisi Rak', 1135, 67)])],
  [295, 34, H(674, [F(705, 170, 'caret'), F(885, 240, 'drop'), F(1135, 90)])],
  [334, 20, H(674, [L('Unit', 705, 26), L('Size', 835, 27), L('Stok', 945, 28), L('Gudang', 1015, 49), L('Limit', 1145, 33)])],
  [365, 34, H(674, [F(705, 120, 'drop'), F(835, 100, 'drop'), F(945, 60), F(1015, 120, 'drop', 34, T('A', 10, 16.5, 'margin:1px 0 0 12px')), F(1145, 80)])],
  [405, 20, H(674, [L('Nama Barang', 705, 88)])],
  [436, 33, H(674, [F(705, 520, '', 33)])],
  [476, 156, H(674, [[705, 520, `<div class="list"><div class="top"><div class="rows">
<div class="hd"><div class="c1">${T('No', 18, 16)}</div><div class="c2">${T('Catalog Number', 105, 16)}</div><div class="c3">${T('Nama Barang', 88, 16)}</div></div>
${data.map(r => `<div class="rw"><div class="c1">${T(r[0], r[1], 16)}</div><div class="c2">${T(r[2], r[3], 16)}</div><div class="c3">${T(r[4], r[5], 16)}</div></div>`).join('')}</div>
<div class="vs">${bev(21, 21, 'u')}${bev(21, 15)}<div class="tr"></div>${bev(21, 21, 'd')}</div></div>
<div class="hs">${bev(21, 21, 'l')}${bev(199, 21)}<div class="tr"></div>${bev(21, 21, 'r')}<div class="k"></div></div></div>`]])],
  [646, 61, H(674, [B('Add', 705, 97, 31, 41), B('Delete', 805, 97, 49, 41), B('Update', 905, 97, 56, 41), B('Reset', 1005, 97, 43, 41), B('Close', 1115, 107, 43, 61)])],
  [706, 20, H(674, [L('Cari Nama Barang', 705, 118)])],
  [737, 37, H(674, [F(705, 460, '', 37), F(1175, 40, '', 37)])],
]), `:host{width:571px;height:597px;background:#272a32;border:1px solid #4a4c52;border-top:0;border-radius:9px;overflow:hidden;font-family:"Roboto Condensed",Roboto,sans-serif;font-weight:400;color:#f4f4f4;--dy:.8px;box-shadow:0 28px 54px rgba(0,0,0,.38),0 2px 22px rgba(0,0,0,.32)}
:host>.v,.v{margin-left:-1px}
.bar{height:37px;background:#f2f4f9;display:flex;align-items:center;justify-content:space-between;padding:0 15px 3px 9px;margin:0 -1px}
.list{width:520px;height:156px;border:1px solid #6a6a6a;background:#3f3f3f;--dx:-1px;--dy:.5px}
.top{display:flex;height:133px}.rows{width:497px;flex:none;overflow:hidden}
.hd,.rw{display:flex;height:19px}.hd{border-bottom:1px solid #fff;height:19px}
.c1,.c2,.c3{display:flex;align-items:center;justify-content:center;flex:none;overflow:visible}
.c1{width:51px;padding-left:8px;--dx:-.3px}.c2{width:167px;padding-left:8px}.c3{width:341px}
.hd .c1,.hd .c2{border-right:1px solid #fff}
.vs{width:21px;display:flex;flex-direction:column}.hs{display:flex;height:21px}
.tr{flex:1;background:repeating-conic-gradient(#fff 0 25%,#ededed 0 50%) 0 0/2px 2px}
.k{width:21px;background:#f0f0f0}
form-button{--dx:-.6px;--dy:0px}`);

/* ---- sheet tabs and status bar ---- */
def('sheet-tabs', H(0, [
  [32, 8, S(8, 13, '<path d="M7 1L1 6.500L7 12" stroke="#d0d0d0" stroke-width="1.500"/>')],
  [72, 8, S(8, 13, '<path d="M1 1L7 6.500L1 12" stroke="#d0d0d0" stroke-width="1.500"/>')],
  [141, 71, `<div class="tab"><div>${T('MENU', 51, 18, 'color:#2b3b22')}</div></div>`],
  [217, 1, '<div style="width:1px;height:24px;background:#777"></div>'],
  [270, 15, S(15, 15, '<path d="M7.500 0V15M0 7.500H15" stroke="#e0e0e0" stroke-width="1.600"/>')]]),
`:host{height:40px;display:flex;background:#2d2d2d;border-top:1px solid #4f4f4f}
.h{height:37px}
.tab{width:71px;height:35px;margin:-1px 0 1px;border-radius:0 0 5px 5px;background:linear-gradient(#fff,#cdebb8);border:1px solid #fff;border-top:0;display:flex;justify-content:center}
.tab div{border-bottom:2px solid #1a7340;height:32px;padding-top:4px}`);
def('status-bar', H(0, [
  [9, 36, T('Ready', 36, 12.5)],
  [70, 18, S(18, 17, '<path d="M9 14.500H.7V.7H17.300V5M.7 4H17.300M3 7H8M3 9.500H7M3 12H6.500" stroke="#e0e0e0" stroke-width="1.400"/><circle cx="12" cy="11" r="5" stroke="#e0e0e0" stroke-width="1.400"/><circle cx="12" cy="11" r="2.500" fill="#e0e0e0"/>'), 'padding-top:2px'],
  [110, 18, S(18, 18, '<circle cx="8" cy="2.500" r="2" stroke="#e8e8e8" stroke-width="1.300"/><path d="M1 4Q8 8 15 4L15.500 6L10.500 8V11L8 9.500L6 17L3.500 16L5.500 8L.8 6ZM9 10L17 17M17 10L9 17" stroke="#e8e8e8" stroke-width="1.300"/>')],
  [131, 137, T('Accessibility: Investigate', 138, 12.5)],
  [1547, 50, `<div class="on">${S(17, 17, '<path d="M.7 .7H16.300V16.300H.7ZM.7 5.800H16.300M.7 11H16.300M5.800 .7V16.300M11 .7V16.300" stroke="#fff" stroke-width="1.400"/>')}</div>`],
  [1614, 18, S(18, 17, '<path d="M.7 .7H17.300V16.300H.7ZM4.500 3.500H13.500V13.500H4.500ZM6 6H12M6 8.500H12M6 11H12" stroke="#e8e8e8" stroke-width="1.300"/>')],
  [1664, 18, S(18, 17, '<path d="M.7 .7H17.300V16.300H.7ZM.7 10H11.500V.7M6 .7V10" stroke="#e8e8e8" stroke-width="1.400"/>')],
  [1705, 10, S(10, 2, '<path d="M0 1H10" stroke="#fff" stroke-width="1.200"/>')],
  [1721, 125, S(125, 14, '<path d="M0 7.500H125" stroke="#ccc"/><rect x="60" y="0" width="6" height="14" fill="#ccc"/>')],
  [1852, 10, S(10, 10, '<path d="M0 5H10M5 0V10" stroke="#fff" stroke-width="1.200"/>')],
  [1878, 31, T('100%', 31, 12.5)]]),
`:host{height:27px;display:flex;background:#383838;color:#f0f0f0;--dy:1.3px}
.on{width:50px;height:26px;background:#474747;display:flex;align-items:center;justify-content:center}`);

/* ---- taskbar ---- */
const apps = [
  [799, S(30, 27, '<rect y="8" width="23" height="19" rx="1" fill="#6f6f6f"/><rect x="7.500" y="0" width="22.500" height="20" rx="1" fill="#f2f2f2"/><rect x="7.500" y="8" width="15.500" height="12" fill="#bcbcbc"/>')],
  [854, S(28, 28, '<defs><linearGradient id="c" x1="0" y1="0" x2=".6" y2="1"><stop stop-color="#a06ab4"/><stop offset=".4" stop-color="#6a76d8"/><stop offset="1" stop-color="#4f52c8"/></linearGradient></defs><path d="M14 0A14 14 0 1 1 9 27L0 28L2.500 22A14 14 0 0 1 14 0Z" fill="url(#c)"/><rect x="6" y="8" width="12" height="12" rx="1.500" fill="#fff"/><path d="M19 12L23 9V19L19 16Z" fill="#fff"/>')],
  [908, S(23, 30, '<rect width="23" height="30" rx="2" fill="#76828c"/><rect x="2.500" y="2.500" width="18" height="6" rx="1" fill="#3ed0f4"/><path d="M2.500 10.500H7.500V15.500H2.500ZM9 10.500H14V15.500H9ZM15.500 10.500H20.500V15.500H15.500ZM2.500 16.500H7.500V21.500H2.500ZM9 16.500H14V21.500H9ZM2.500 22.500H7.500V27.500H2.500ZM9 22.500H14V27.500H9Z" fill="#d5dce2"/><path d="M15.500 16.500H20.500V27.500H15.500Z" fill="#0d4a86"/>')],
  [964, S(30, 27, '<path d="M0 1.500Q0 0 1.500 0H9L13 3.500H28V26.500H0Z" fill="#d89b06"/><path d="M0 5H9L12 3.500H28.500Q30 3.500 30 5V26.500H0Z" fill="#ffcc3d"/><path d="M5 26.500V22Q5 19 8 19H22Q25 19 25 22V26.500Z" fill="#0a72c8"/><path d="M9 22.500H21" stroke="#073f78" stroke-width="1.300"/>'), 1],
  [1019, S(28, 29, '<defs><linearGradient id="o" x1="0" y1="0" x2="1" y2="1"><stop stop-color="#f2202c"/><stop offset="1" stop-color="#a00714"/></linearGradient></defs><ellipse cx="14" cy="14.500" rx="14" ry="14.500" fill="url(#o)"/><path d="M14 2Q28 4 28 14.500Q27 27 14 27Z" fill="#ff4a4a"/><ellipse cx="15" cy="14.500" rx="6" ry="11.500" fill="#222526"/>'), 1],
  [1074, S(30, 23, '<rect x=".7" y=".7" width="28.600" height="21.600" fill="#eef2f5" stroke="#8b98a6" stroke-width="1.400"/><path d="M2 16L6 17L8 5L10 9L12 13L15 12L17 16L18 6L20 10L22 13L24 5L26 15L28 16V21H2Z" fill="#a5d3f6"/><path d="M2 16L6 17L8 5L10 9L12 13L15 12L17 16L18 6L20 10L22 13L24 5L26 15L28 16" stroke="#5aa9e6" stroke-width=".8"/>')],
  [1129, S(22, 30, '<rect y="25" width="22" height="5" rx="1" fill="#a85a18"/><rect y="2" width="22" height="25" rx="1" fill="#4fc3e0"/><path d="M0 26H22" stroke="#eee" stroke-width="1.500"/><path d="M4 9.500H18M4 14.500H18M4 19.500H18" stroke="#0e6a8e" stroke-width="1.800"/><path d="M4 0V4M8.700 0V4M13.400 0V4M18 0V4" stroke="#1b84a8" stroke-width="2"/>')],
  [1184, S(28, 23, '<path d="M4 4Q8 0 12 2L20 3Q25 1 26 8Q28 15 27 21Q25 24 22 18L20 14H12L6 16Q2 20 0 16Q0 10 4 4Z" fill="#b4c0d0"/><circle cx="8" cy="6" r="2.500" fill="#60728a"/><circle cx="13" cy="11" r="2.500" fill="#60728a"/><circle cx="19" cy="11.500" r="2.500" fill="#60728a"/><circle cx="22.500" cy="6.500" r="2" fill="#eef"/>'), 0],
  [1239, S(30, 30, '<rect width="30" height="30" fill="#000"/><text x="9" y="25" font-family="Open Sans" font-weight="800" font-size="27" fill="#e50914" textLength="12" lengthAdjust="spacingAndGlyphs">N</text>')],
  [1294, S(30, 28, '<rect x="4" y="7" width="26" height="20.500" rx="1" fill="#5f656b"/><path d="M4 26.500H30" stroke="#8e979f" stroke-width="2"/><rect width="22" height="15.500" rx="1.500" fill="#28b8cc"/><path d="M3 3.500H19M5 7.500H17" stroke="#fff" stroke-width="2" stroke-dasharray="2 1.800"/><path d="M4 12H18" stroke="#fff" stroke-width="2"/>')],
  [1349, S(30, 30, '<path d="M2 0H23L30 8V28Q30 30 28 30H2Q0 30 0 28V2Q0 0 2 0Z" fill="#3f82f7"/><text x="4.500" y="24.500" font-family="Open Sans" font-weight="800" font-size="33" fill="#fff" textLength="21" lengthAdjust="spacingAndGlyphs">n</text>'), 1],
  [1404, S(28, 29, '<ellipse cx="14" cy="14.500" rx="14" ry="14.500" fill="#1ed760"/><path d="M5 10Q14 7 24 12M6 15Q14 12.500 22 16.500M7 19.500Q14 17.500 20 21" stroke="#16211a" stroke-width="2.600" stroke-linecap="round"/>'), 1],
  [1459, excelLogo(29, 27), 2]];
def('task-bar', H(0, [
  [15, 27, S(27, 26, '<defs><linearGradient id="m" x1="0" y1="0" x2="1" y2="1"><stop stop-color="#b9bec6"/><stop offset="1" stop-color="#7e8794"/></linearGradient></defs><circle cx="13" cy="13" r="13" fill="url(#m)"/><path d="M16 22Q11 22 11.500 18.500Q12 16 15 16Q16 12 20 12Q24 12 24.500 16Q28 16 28 19Q28 22 25 22Z" fill="#eef1f4"/>')],
  [448, 29, S(29, 29, '<defs><linearGradient id="w" x1="0" y1="0" x2="1" y2="1"><stop stop-color="#7df3ff"/><stop offset="1" stop-color="#0a90f6"/></linearGradient></defs><path d="M0 0H14V14H0ZM15 0H29V14H15ZM0 15H14V29H0ZM15 15H29V29H15Z" fill="url(#w)"/>')],
  [493, 275, `<div class="s">${H(494, [[508, 18, S(18, 18, '<circle cx="8" cy="7.500" r="6.500" stroke="#ececec" stroke-width="2"/><path d="M12.500 12.500L17.500 17.500" stroke="#ececec" stroke-width="2.500"/>')], [539, 51, T('Search', 52, 16, 'color:#d0d2d3;--dy:.5px')]])}</div>`],
  ...apps.map(([cx, c, d]) => [cx - 25, 50, `<div class="app ${d === 2 ? 'on' : ''}">${c}${d ? '<i></i>' : ''}</div>`]),
  [1646, 14, S(14, 8, '<path d="M1 7L7 1L13 7" stroke="#fff" stroke-width="1.800"/>')],
  [1684, 18, S(18, 15, '<path d="M0 5Q9 -4 18 5" stroke="#666b6e" stroke-width="1.500"/><path d="M3 8Q9 2 15 8M5.500 11Q9 7.500 12.500 11" stroke="#fff" stroke-width="1.500"/><circle cx="9" cy="13" r="1.800" fill="#fff"/>')],
  [1713, 20, S(20, 16, '<path d="M.7 5H4L9 1V15L4 11H.7ZM11.500 5Q13.500 8 11.500 11" stroke="#fff" stroke-width="1.400"/><path d="M14 3Q17.500 8 14 13M17 1Q21 8 17 15" stroke="#777c7f" stroke-width="1.300"/>')],
  [1743, 20, S(20, 13, '<rect x=".7" y=".7" width="16.600" height="11.600" rx="3" stroke="#fff" stroke-width="1.400"/><rect x="2.500" y="2.500" width="13" height="8" rx="1.500" fill="#fff"/><path d="M18.500 4.500V8.500" stroke="#fff" stroke-width="2"/>')],
  [1784, 79, `<div class="clk">${T('10:24', 37, 14.5)}${T('08/10/2023', 78, 14.5)}</div>`],
  [1875, 20, `<div class="bd">${T('1', 6, 12.5)}</div>`]]),
`:host{height:60px;display:flex;border-top:1px solid #43474a;background:linear-gradient(90deg,#1f2528,#1f2527 22%,#262726 55%,#1f2528 75%,#1e2427)}
.s{width:275px;height:40px;border-radius:20px;background:#424546;border:1px solid #54585a;border-top-color:#66696b;display:flex}
.app{width:50px;height:50px;border-radius:5px;display:flex;align-items:center;justify-content:center;position:relative}
.app.on{background:#2c3135;border:1px solid #363b3e}
.app i{position:absolute;bottom:1px;left:21px;width:8px;height:4px;border-radius:2px;background:#9a9d9f}
.app.on i{left:14px;bottom:0;width:20px;background:#f48062}
.clk{display:flex;flex-direction:column;align-items:flex-end;gap:1px;--dx:-.5px;--dy:-.5px}
.bd{width:20px;height:20px;border-radius:50%;background:#f48062;color:#2a1512;display:flex;align-items:center;justify-content:center}`);

def('excel-app', `<title-bar></title-bar><ribbon-tabs></ribbon-tabs><excel-ribbon></excel-ribbon><formula-bar></formula-bar><sheet-grid></sheet-grid><sheet-tabs></sheet-tabs><status-bar></status-bar><task-bar></task-bar><user-form></user-form>`,
`:host{width:1920px;height:1080px;display:flex;flex-direction:column;position:relative;background:#2d2d2d}
user-form{position:absolute;left:674px;top:208px}`);
</script>
</body>
</html>
